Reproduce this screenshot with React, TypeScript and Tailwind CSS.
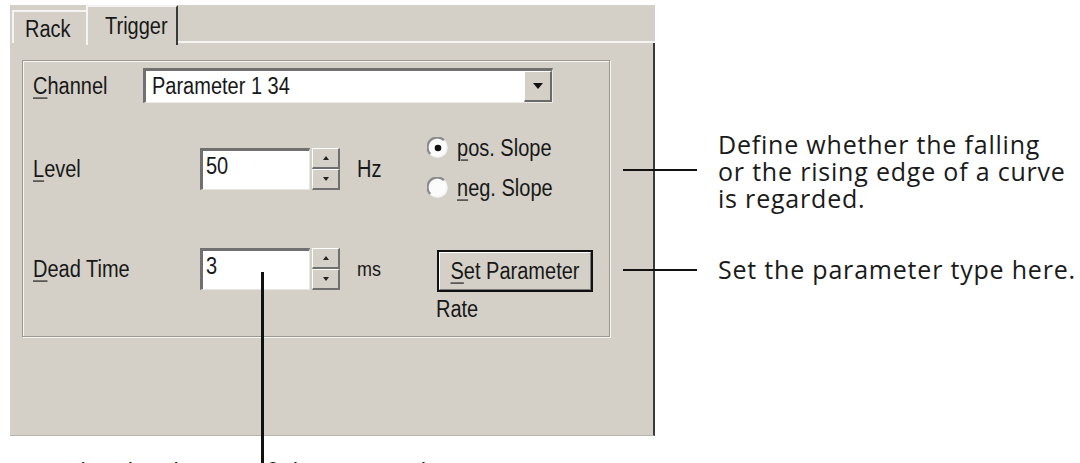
import React from 'react';

const GRAY = 'bg-[#d4d0c8]';

// dialog text is a little taller than Arial, so it is stretched a bit
const T: React.FC<{ children: React.ReactNode; className?: string }> = ({ children, className = '' }) => (
  <span className={`inline-block scale-y-[1.15] ${className}`}>{children}</span>
);

const U: React.FC<{ children: React.ReactNode }> = ({ children }) => <span className="underline underline-offset-[3px] decoration-1">{children}</span>;

const Spinner: React.FC = () => (
  <div className="flex flex-col w-[28px] h-[42px] ml-[2px]">
    {[0, 1].map((i) => (
      <div
        key={i}
        className="flex-1 flex items-center justify-center bg-[#d4d0c8] border-t border-l border-t-white border-l-white border-r-2 border-b-2 border-r-[#6f6f6f] border-b-[#6f6f6f]"
      >
        <svg width="6" height="4" viewBox="0 0 6 4">
          {i === 0 ? <path d="M3 0 L6 4 L0 4 Z" fill="#222" /> : <path d="M0 0 L6 0 L3 4 Z" fill="#222" />}
        </svg>
      </div>
    ))}
  </div>
);

const Edit: React.FC<{ value: string }> = ({ value }) => (
  <div className="w-[110px] h-[42px] bg-white border-t-[3px] border-l-[3px] border-t-[#707070] border-l-[#707070] border-b border-r border-b-[#e8e6e0] border-r-[#e8e6e0] pl-[3px] pt-[2px] text-[20px] leading-[26px] text-[#181818]">
    <T>{value}</T>
  </div>
);

const Radio: React.FC<{ checked?: boolean; children: React.ReactNode }> = ({ checked, children }) => (
  <div className="flex items-center h-[22px]">
    <svg width="22" height="22" viewBox="0 0 22 22" className="shrink-0">
      <circle cx="11" cy="11" r="9.5" fill="#fbfbfb" />
      <path d="M3.3 17 A9.5 9.5 0 0 1 17 3.3" stroke="#8a8a8a" strokeWidth="2.2" fill="none" />
      <path d="M17 3.3 A9.5 9.5 0 0 1 3.3 17" stroke="#f4f4f4" strokeWidth="1.5" fill="none" />
      {checked && <circle cx="11" cy="11" r="3.3" fill="#111" />}
    </svg>
    <span className="ml-[8px] text-[20px] leading-[22px] text-[#181818]">
      <T>{children}</T>
    </span>
  </div>
);

const CALLOUT_FONT = { fontFamily: '"Open Sans", "Noto Sans", sans-serif' };

export default function App() {
  return (
    <div
      className="relative w-[1080px] h-[463px] overflow-hidden bg-white text-[#181818]"
      style={{ fontFamily: '"Liberation Sans", Arial, sans-serif' }}
    >
      <div className="flex">
        {/* dialog */}
        <div className={`shrink-0 ml-[10px] mt-[5px] w-[645px] h-[431px] ${GRAY} flex flex-col`}>
          {/* tabs */}
          <div className="flex items-end h-[38px] pl-[2px]">
            <div className="w-[76px] h-[33px] border-t-2 border-l-2 border-t-[#f4f4f2] border-l-[#f4f4f2] pl-[11px] pt-[6px] text-[20px] leading-[22px]">
              <T>Rack</T>
            </div>
            <div className="-ml-[2px] w-[92px] h-[40px] -mb-[2px] relative border-t-2 border-l-2 border-t-[#f4f4f2] border-l-[#f4f4f2] border-r-2 border-r-[#3a3a3a] pl-[17px] pt-[8px] text-[20px] leading-[22px]">
              <T>Trigger</T>
            </div>
            <div className="flex-1 h-[2px] bg-[#f4f4f2]" />
          </div>
          {/* page */}
          <div className="flex-1 border-r-2 border-r-[#3a3a3a] border-b border-b-[#b8b5ae] pl-[12px] pt-[17px]">
            <div className="w-[588px] h-[277px] border border-[#9a978f] shadow-[inset_1px_1px_0_#f6f6f4,1px_1px_0_#f6f6f4] text-[20px]">
              {/* channel row */}
              <div className="flex items-center h-[35px] mt-[7px]">
                <div className="w-[120px] pl-[10px]">
                  <T><U>C</U>hannel</T>
                </div>
                <div className="w-[410px] h-[35px] flex bg-white border-t-[3px] border-l-[3px] border-t-[#707070] border-l-[#707070] border-b border-r border-b-[#ecebe6] border-r-[#ecebe6]">
                  <div className="flex-1 pl-[6px] leading-[30px]">
                    <T>Parameter 1 34</T>
                  </div>
                  <div className="w-[28px] flex items-center justify-center bg-[#d4d0c8] border-t border-l border-t-white border-l-white border-r-2 border-b-2 border-r-[#6a6a6a] border-b-[#6a6a6a]">
                    <svg width="10" height="6" viewBox="0 0 10 6">
                      <path d="M0 0 L10 0 L5 6 Z" fill="#111" />
                    </svg>
                  </div>
                </div>
              </div>

              {/* level row */}
              <div className="flex items-center h-[64px] mt-[34px]">
                <div className="w-[177px] pl-[10px]">
                  <T><U>L</U>evel</T>
                </div>
                <Edit value="50" />
                <Spinner />
                <div className="w-[87px] pl-[17px]">
                  <T>Hz</T>
                </div>
                <div className="flex flex-col gap-[18px] -mt-[2px]">
                  <Radio checked>
                    <U>p</U>os. Slope
                  </Radio>
                  <Radio>
                    <U>n</U>eg. Slope
                  </Radio>
                </div>
              </div>

              {/* dead time row */}
              <div className="flex items-center h-[44px] mt-[46px]">
                <div className="w-[177px] pl-[10px]">
                  <T><U>D</U>ead Time</T>
                </div>
                <Edit value="3" />
                <Spinner />
                <div className="w-[97px] pl-[17px] text-[18px]">
                  <T>ms</T>
                </div>
                <div className="w-[156px] h-[42px] mt-[3px] border-2 border-[#111] flex items-center justify-center">
                  <div className="w-full h-full border-t border-l border-t-white border-l-white border-r border-b border-r-[#7a7a7a] border-b-[#7a7a7a] flex items-center justify-center">
                    <T><U>S</U>et Parameter</T>
                  </div>
                </div>
              </div>

              <div className="pl-[413px] mt-[6px] leading-[24px]">
                <T>Rate</T>
              </div>
            </div>
          </div>
        </div>

        {/* callouts */}
        <div className="shrink-0 ml-[63px] text-[#1a1a1a] text-[25px] tracking-[0.8px] whitespace-nowrap" style={CALLOUT_FONT}>
          <div className="mt-[131px] leading-[27px]">
            <div>Define whether the falling</div>
            <div>or the rising edge of a curve</div>
            <div>is regarded.</div>
          </div>
          <div className="mt-[44px] leading-[27px]">Set the parameter type here.</div>
        </div>
      </div>

      {/* caption below, mostly cut off by the picture edge */}
      <div className="pl-[24px] mt-[22px] text-[25px] leading-[27px] tracking-[0.8px] text-[#1a1a1a] whitespace-nowrap" style={CALLOUT_FONT}>
        Set the dead time of the trigger here.
      </div>

      {/* callout lines */}
      <div className="absolute left-[623px] top-[169px] w-[74px] h-[2px] bg-[#111]" />
      <div className="absolute left-[623px] top-[269px] w-[74px] h-[2px] bg-[#111]" />
      <div className="absolute left-[261px] top-[272px] w-[3px] h-[191px] bg-[#111]" />
    </div>
  );
}
